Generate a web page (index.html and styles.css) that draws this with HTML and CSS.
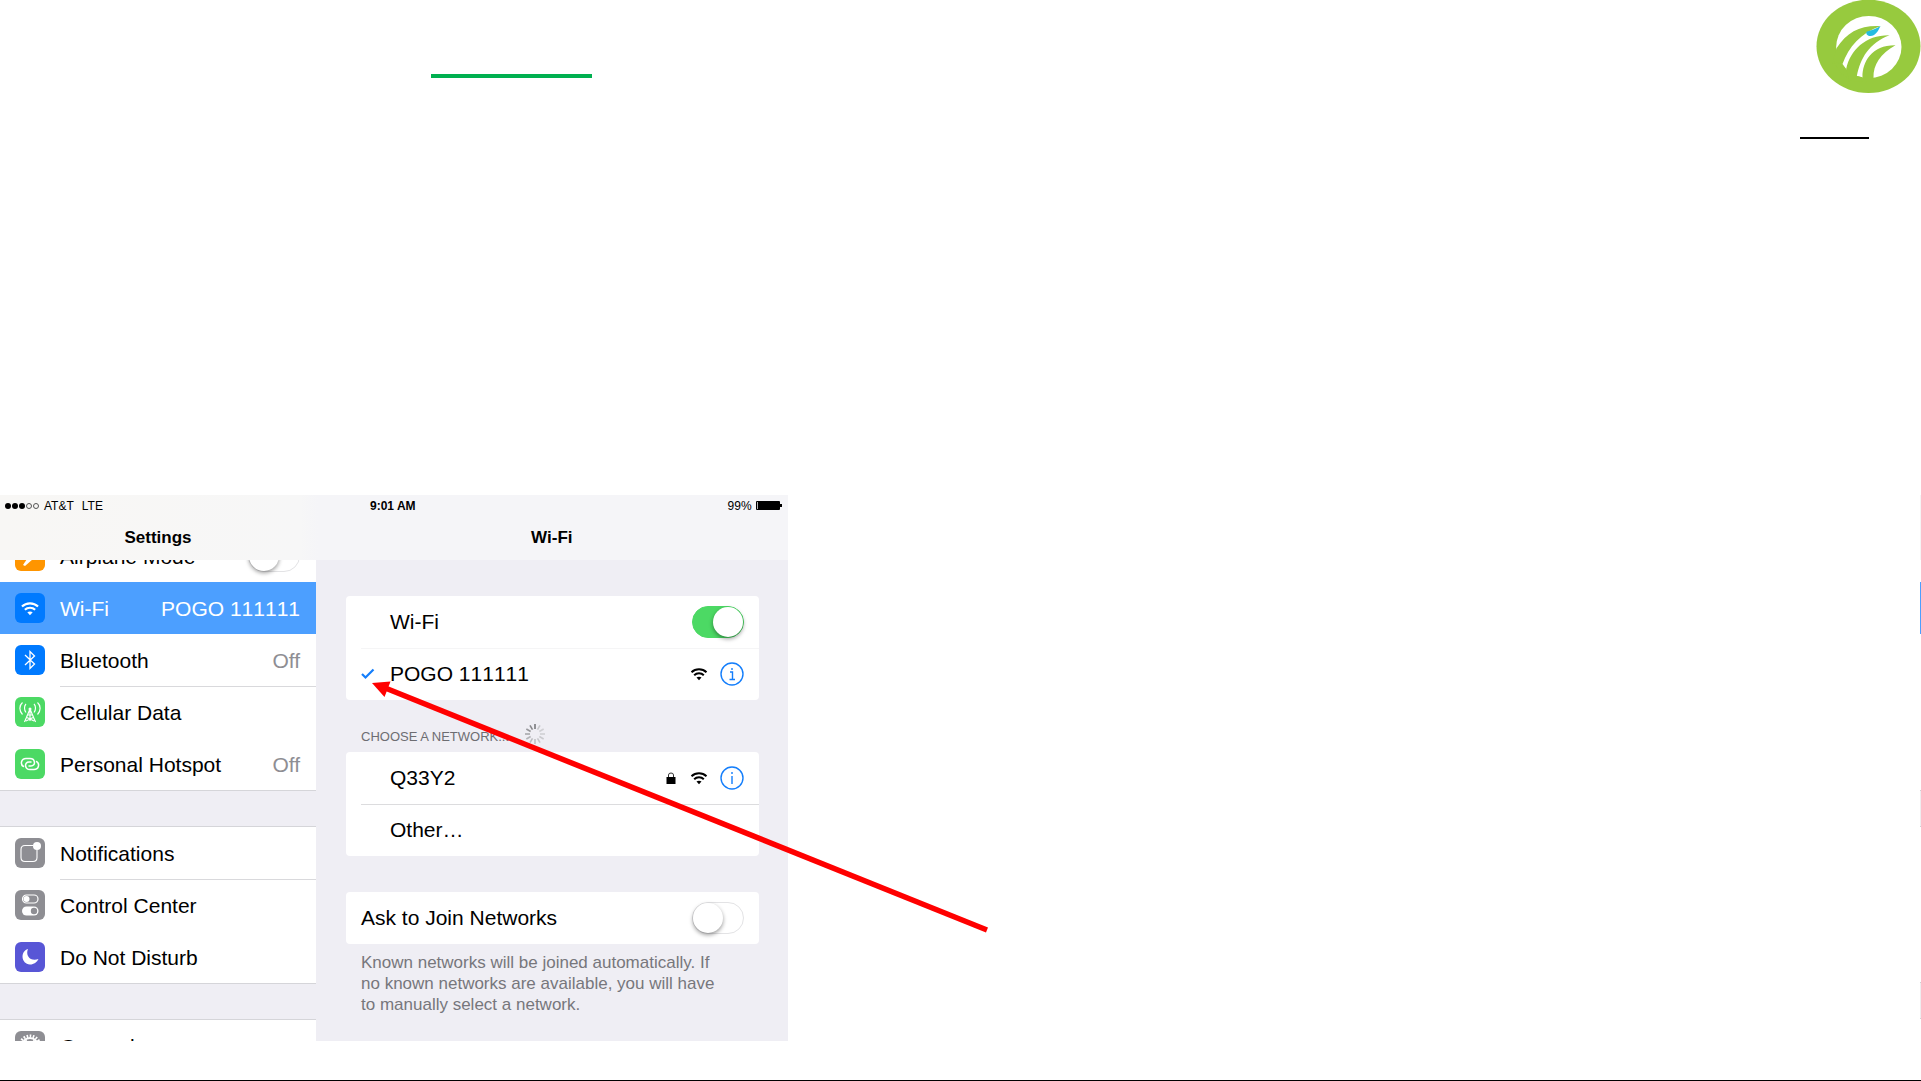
FILE: index.html
```html
<!DOCTYPE html>
<html lang="en">
<head>
  <meta charset="UTF-8">
  <meta name="viewport" content="width=device-width, initial-scale=1.0">
  <title>Wi-Fi Settings</title>
  <link rel="stylesheet" href="styles.css">
</head>
<body>
  <!-- shared symbols -->
  <svg class="symbols" aria-hidden="true">
    <symbol id="wifi" viewBox="0 0 18 14">
      <path d="M1.5 5.2C5.6 1.2 12.4 1.2 16.5 5.2M4.2 8.2C6.8 5.6 11.2 5.6 13.8 8.2" fill="none" stroke="currentColor" stroke-width="2"/>
      <path d="M6.5 10.6C7.9 9.4 10.1 9.4 11.5 10.6L9 13.2Z" fill="currentColor"/>
    </symbol>
  </svg>

  <header class="top">
    <hr class="green-line">
    <div class="brand">
      <svg class="logo" viewBox="108 0 312 279" role="img" aria-label="Logo">
        <ellipse cx="264" cy="139" rx="156" ry="140" fill="#97ca3e"/>
        <ellipse cx="265" cy="141" rx="98" ry="93" fill="#fff"/>
        <g fill="#97ca3e">
          <path d="M300 78C240 75 200 95 168 145L155 190L186 192C205 140 240 100 300 78Z"/>
          <path d="M327 106C255 105 210 150 197 207L205 245L229 228C240 175 265 130 327 106Z"/>
          <path d="M229 228L246 232V245H220Z"/>
          <path d="M345 136C275 135 245 185 246 232L255 248L279 233C278 195 300 160 345 136Z"/>
          <path d="M160 185L186 192L197 207L205 235L180 220Z"/>
        </g>
        <path d="M300 78C292 95 284 108 270 108C261 108 256 102 258 95C275 91 288 86 300 78Z" fill="#24bce0"/>
      </svg>
      <hr class="black-line">
    </div>
  </header>

  <main class="stage">
    <section class="tablet">
      <header class="bar">
        <div class="status">
          <div class="carrier">
            <svg width="36" height="8" viewBox="0 0 36 8" aria-hidden="true">
              <circle cx="4" cy="4" r="3"/><circle cx="11" cy="4" r="3"/><circle cx="18" cy="4" r="3"/>
              <g fill="none" stroke="#555"><circle cx="25" cy="4" r="2.5"/><circle cx="32" cy="4" r="2.5"/></g>
            </svg>
            <span>AT&amp;T</span>
            <span class="lte">LTE</span>
          </div>
          <b>9:01 AM</b>
          <div class="battery">
            <span>99%</span>
            <svg width="26" height="9" viewBox="0 0 26 9" aria-hidden="true">
              <rect x="0" y="0" width="24" height="9" rx="1"/><rect x="24" y="3" width="2" height="3"/>
              <path d="M1.5 1V8" stroke="#fff" stroke-width=".7"/>
            </svg>
          </div>
        </div>
        <div class="titles">
          <h1>Settings</h1>
          <h2>Wi-Fi</h2>
        </div>
      </header>

      <div class="panes">
        <nav class="side">
          <div class="group first">
            <div class="item">
              <svg class="icon orange" viewBox="0 0 30 30"><path d="M22 8L14 15L8 24L10 25L18 18L24 10Z" fill="#fff"/></svg>
              <label for="airplane">Airplane Mode</label>
              <input class="switch" type="checkbox" id="airplane">
            </div>
            <a class="item active" href="#wifi-pane">
              <svg class="icon blue" viewBox="0 0 30 30"><use href="#wifi" x="5" y="8" width="20" height="15"/></svg>
              <span>Wi-Fi</span><span class="value network">POGO 111111</span>
            </a>
            <a class="item" href="#bluetooth">
              <svg class="icon blue" viewBox="0 0 30 30"><path d="M10 10L19.500 19L15 23.500V6.500L19.500 11L10 20" fill="none" stroke="#fff" stroke-width="1.300"/></svg>
              <span>Bluetooth</span><span class="value">Off</span>
            </a>
            <a class="item lined" href="#cellular">
              <svg class="icon green" viewBox="0 0 30 30">
                <g fill="none" stroke="#fff" stroke-width="1.200">
                  <path d="M15 12L9.500 25M15 12L20.500 25M15 12V24M11 20L19 24M19 20L11 24M12.500 18H17.500"/>
                  <path d="M11 7C9 9 9 13 11 15.500M19 7C21 9 21 13 19 15.500M7.500 5.500C4 8.500 4 14 7.500 17.500M22.500 5.500C26 8.500 26 14 22.500 17.500"/>
                </g>
                <circle cx="15" cy="12" r="1.500" fill="#fff"/>
              </svg>
              <span>Cellular Data</span>
            </a>
            <a class="item" href="#hotspot">
              <svg class="icon green" viewBox="0 0 30 30">
                <g fill="none" stroke="#fff" stroke-width="1.500" stroke-linecap="round">
                  <path d="M8.500 17.500C5 15.500 6 9.500 11 9.500H15C20.500 9.500 21 17 16 17H14"/>
                  <path d="M21.500 12.500C25 14.500 24 20.500 19 20.500H15C9.500 20.500 9 13 14 13H16"/>
                </g>
              </svg>
              <span>Personal Hotspot</span><span class="value">Off</span>
            </a>
          </div>

          <div class="group">
            <a class="item" href="#notifications">
              <svg class="icon gray" viewBox="0 0 30 30">
                <path d="M18 7.500H10Q6 7.500 6 11.500V19.500Q6 23.500 10 23.500H18Q22 23.500 22 19.500V12" fill="none" stroke="#fff" stroke-width="1.100"/>
                <circle cx="22" cy="8" r="4" fill="#fff"/>
              </svg>
              <span>Notifications</span>
            </a>
            <a class="item lined" href="#control">
              <svg class="icon gray" viewBox="0 0 30 30">
                <rect x="7.500" y="5" width="15.500" height="8" rx="4" fill="none" stroke="#fff" stroke-width="1.200"/>
                <circle cx="11.500" cy="9" r="3" fill="#fff"/>
                <rect x="7" y="16.500" width="16.500" height="9" rx="4.500" fill="#fff"/>
                <circle cx="19" cy="21" r="3.200" fill="#8e8e93"/>
              </svg>
              <span>Control Center</span>
            </a>
            <a class="item" href="#dnd">
              <svg class="icon purple" viewBox="0 0 30 30"><path d="M13 7C5 9 6 22 15 22.500C19 22.500 22 20 23.500 17C16 20 10 14 13 7Z" fill="#fff"/></svg>
              <span>Do Not Disturb</span>
            </a>
          </div>

          <div class="group">
            <a class="item" href="#general">
              <svg class="icon gray" viewBox="0 0 30 30">
                <g fill="none" stroke="#fff">
                  <circle cx="15" cy="15" r="10" stroke-width="3" stroke-dasharray="1.600 1.500"/>
                  <circle cx="15" cy="15" r="8" stroke-width="1.800"/>
                  <path d="M15 15L10 8M15 15L20 8M15 15H23" stroke-width="1.300"/>
                </g>
              </svg>
              <span>General</span>
            </a>
          </div>
        </nav>

        <div class="detail" id="wifi-pane">
          <div class="card">
            <div class="row">
              <span class="tick"></span>
              <label for="wifi-on">Wi-Fi</label>
              <input class="switch" type="checkbox" id="wifi-on" checked>
            </div>
            <div class="row faint">
              <span class="tick"><svg width="14" height="12" viewBox="0 0 14 12"><path d="M1 6L4.500 9.500L12.500 1.500" fill="none" stroke="#147efb" stroke-width="2.200"/></svg></span>
              <span class="network">POGO 111111</span>
              <div class="extras">
                <svg width="18" height="14"><use href="#wifi"/></svg>
                <button class="info" type="button" aria-label="POGO 111111 details">
                  <svg viewBox="0 0 24 24"><circle cx="12" cy="12" r="11"/><path d="M10 10H12.500V17M9.500 17.500H15M12 6V8"/></svg>
                </button>
              </div>
            </div>
          </div>

          <div class="caption">
            <h3>CHOOSE A NETWORK...</h3>
            <svg class="spinner" viewBox="-10 -10 20 20" aria-hidden="true">
              <g stroke-width="1.600">
                <path d="M0 -5V-10" stroke="#77777b"/>
                <path d="M0 -5V-10" stroke="#c8c8cc" transform="rotate(30)"/>
                <path d="M0 -5V-10" stroke="#d0d0d4" transform="rotate(60)"/>
                <path d="M0 -5V-10" stroke="#d0d0d4" transform="rotate(90)"/>
                <path d="M0 -5V-10" stroke="#cacace" transform="rotate(120)"/>
                <path d="M0 -5V-10" stroke="#c6c6ca" transform="rotate(150)"/>
                <path d="M0 -5V-10" stroke="#c0c0c4" transform="rotate(180)"/>
                <path d="M0 -5V-10" stroke="#bcbcc0" transform="rotate(210)"/>
                <path d="M0 -5V-10" stroke="#b4b4b8" transform="rotate(240)"/>
                <path d="M0 -5V-10" stroke="#a8a8ac" transform="rotate(270)"/>
                <path d="M0 -5V-10" stroke="#98989c" transform="rotate(300)"/>
                <path d="M0 -5V-10" stroke="#88888c" transform="rotate(330)"/>
              </g>
            </svg>
          </div>

          <div class="card">
            <div class="row">
              <span class="tick"></span>
              <span>Q33Y2</span>
              <div class="extras">
                <svg class="lock" width="10" height="12" viewBox="0 0 10 12"><path d="M2.500 6V3Q2.500 1 5 1T7.500 3V6" fill="none" stroke="#333"/><rect x="0.500" y="5" width="9" height="7"/></svg>
                <svg width="18" height="14"><use href="#wifi"/></svg>
                <button class="info" type="button" aria-label="Q33Y2 details">
                  <svg viewBox="0 0 24 24"><circle cx="12" cy="12" r="11"/><path d="M12 10V18M12 6V8"/></svg>
                </button>
              </div>
            </div>
            <div class="row lined">
              <span class="tick"></span>
              <span>Other…</span>
            </div>
          </div>

          <div class="card spaced">
            <div class="row">
              <label for="ask">Ask to Join Networks</label>
              <input class="switch" type="checkbox" id="ask">
            </div>
          </div>
          <p class="note">Known networks will be joined automatically. If no known networks are available, you will have to manually select a network.</p>
        </div>
      </div>

      <!-- callout arrow over the tablet -->
      <svg class="arrow" width="620" height="260" viewBox="0 0 620 260" aria-hidden="true">
        <path d="M14 12.500L617 255" stroke="#f00" stroke-width="5.500"/>
        <path d="M2 8L20.500 6.500L14.500 22Z" fill="#f00"/>
      </svg>
    </section>

    <!-- edge of the next tablet -->
    <div class="edge" aria-hidden="true">
      <div class="edge-bar"></div>
      <div class="edge-active"></div>
      <div class="edge-gap"></div>
      <div class="edge-gap"></div>
    </div>
  </main>
</body>
</html>
```

FILE: styles.css
```css
* {
  box-sizing: border-box;
}
body {
  margin: 0;
  min-height: 100vh;
  display: flex;
  flex-direction: column;
  background: #fff;
  border-bottom: 1px solid #000;
  color: #000;
  font-family: "Liberation Sans", Arial, sans-serif;
  font-size: 21px;
  overflow-x: hidden;
}
h1, h2, h3, p, hr {
  margin: 0;
}
hr {
  border: 0;
}
svg {
  display: block;
  flex: none;
}
.symbols {
  width: 0;
  height: 0;
}

/* top of the slide */
.top {
  display: flex;
  justify-content: space-between;
  min-height: 495px;
}
.green-line {
  width: 161px;
  height: 4px;
  margin: 74px 0 0 431px;
  background: #00b050;
}
.brand {
  display: flex;
  flex-direction: column;
  align-items: flex-end;
  gap: 44px;
}
.logo {
  width: 105px;
  height: 93px;
}
.black-line {
  width: 69px;
  height: 2px;
  margin-right: 52px;
  background: #000;
}

.stage {
  display: flex;
  justify-content: space-between;
}

/* tablet */
.tablet {
  position: relative;
  width: 41%;
  min-width: 780px;
}
.bar {
  height: 65px;
  background: linear-gradient(90deg, #f8f7f5, #f7f7f7 300px, #f5f5f8 318px);
}
.status {
  display: grid;
  grid-template-columns: 1fr auto 1fr;
  align-items: center;
  height: 21px;
  padding: 0 6px 0 4px;
  font-size: 12px;
}
.carrier, .battery {
  display: flex;
  align-items: center;
  gap: 4px;
}
.lte {
  margin-left: 4px;
}
.battery {
  justify-content: flex-end;
}
.titles {
  display: grid;
  grid-template-columns: 316px 1fr;
  line-height: 44px;
  text-align: center;
}
.titles h1, .titles h2 {
  font-size: 17px;
}
.panes {
  display: flex;
  height: 481px;
  overflow: hidden;
  background: #efeef4;
}
.side {
  width: 316px;
  flex: none;
}
.group {
  margin-bottom: 35px;
  background: #fff;
  border: solid #d5d5d9;
  border-width: 1px 0;
}
.first {
  margin-top: -31px;
}
.item {
  display: flex;
  align-items: center;
  height: 52px;
  padding: 0 16px 0 15px;
  color: #000;
  text-decoration: none;
}
.item > svg + * {
  margin-left: 15px;
}
.item span, .item label {
  padding-top: 1px;
}
.item .value {
  margin-left: auto;
  color: #8e8e93;
}
.active, .item.active .value {
  color: #fff;
}
.active {
  background: #4c9fff;
}
.item.lined {
  background: linear-gradient(#d9d9dc, #d9d9dc) 60px 0 / 100% 1px no-repeat;
}
.network {
  font-kerning: none;
}
.icon {
  width: 30px;
  height: 30px;
  border-radius: 6px;
  color: #fff;
}
.orange { background: #ff9500; }
.blue { background: #007aff; }
.green { background: #4cd964; }
.gray { background: #8e8e93; }
.purple { background: #5856d6; }

/* switches */
.switch {
  appearance: none;
  width: 52px;
  height: 32px;
  margin: 0 0 0 auto;
  border: 1px solid #e3e3e5;
  border-radius: 16px;
  background: #fff;
}
.switch::before {
  content: "";
  display: block;
  width: 30px;
  height: 30px;
  border-radius: 50%;
  background: #fff;
  box-shadow: 0 2px 4px rgba(0,0,0,0.4);
}
.switch:checked {
  border-color: #4cd964;
  background: #4cd964;
}
.switch:checked::before {
  margin-left: 20px;
}

/* right pane */
.detail {
  flex: 1;
  padding: 36px 29px 0 30px;
}
.card {
  background: #fff;
  border-radius: 4px;
}
.spaced {
  margin-top: 36px;
}
.row {
  display: flex;
  align-items: center;
  height: 52px;
  margin-left: 15px;
  padding-right: 15px;
}
.row.lined {
  box-shadow: inset 0 1px #dcdcde;
}
.row.faint {
  box-shadow: inset 0 1px #f5f5f6;
}
.tick {
  width: 29px;
}
.extras {
  display: flex;
  align-items: center;
  gap: 12px;
  margin-left: auto;
}
.lock {
  margin-right: 2px;
}
.info {
  width: 24px;
  height: 24px;
  padding: 0;
  border: 0;
  background: none;
}
.info svg {
  fill: none;
  stroke: #147efb;
  stroke-width: 1.4;
}
.caption {
  display: flex;
  align-items: center;
  gap: 16px;
  height: 52px;
  padding: 20px 15px 0;
}
.caption h3 {
  font-size: 13px;
  font-weight: normal;
  color: #6d6d72;
}
.spinner {
  width: 20px;
  height: 20px;
  margin-bottom: 4px;
}
.note {
  padding: 8px 30px 0 15px;
  font-size: 17px;
  line-height: 21px;
  color: #77777c;
}
.arrow {
  position: absolute;
  top: 180px;
  left: 370px;
}

/* lines up with the bar and groups of the tablet */
.edge {
  width: 1px;
}
.edge-bar {
  height: 65px;
  background: #f5f5f5;
}
.edge-active {
  height: 52px;
  margin: 22px 0 156px;
  background: #4c9fff;
}
.edge-gap {
  height: 37px;
  margin-bottom: 155px;
  background: #efeef0;
  border: solid #d0d0d2;
  border-width: 1px 0;
}
.edge-gap:last-child {
  margin-bottom: 0;
}
```
